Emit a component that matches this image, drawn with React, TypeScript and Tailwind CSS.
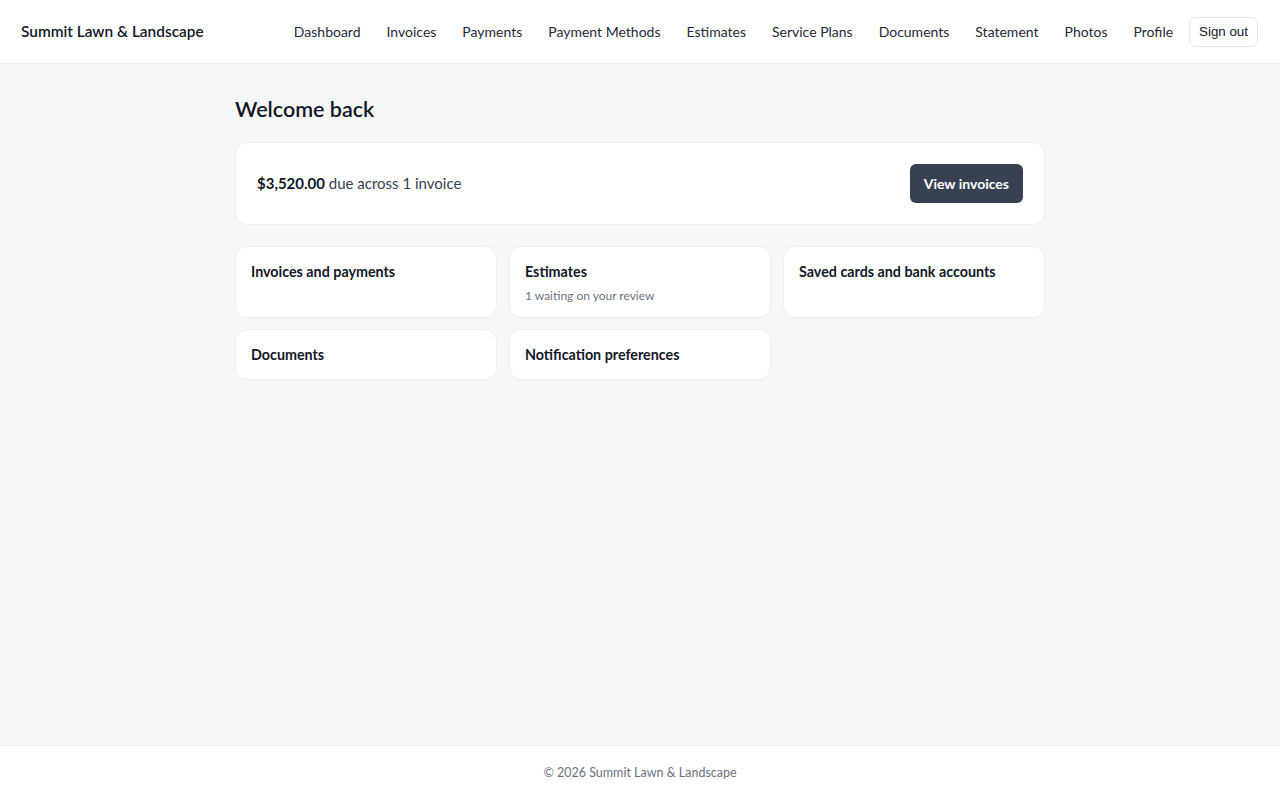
import React from "react";

const navItems = [
  "Dashboard",
  "Invoices",
  "Payments",
  "Payment Methods",
  "Estimates",
  "Service Plans",
  "Documents",
  "Statement",
  "Photos",
  "Profile",
];

const cards: { title: string; sub?: string }[] = [
  { title: "Invoices and payments" },
  { title: "Estimates", sub: "1 waiting on your review" },
  { title: "Saved cards and bank accounts" },
  { title: "Documents" },
  { title: "Notification preferences" },
];

export default function App() {
  return (
    <div
      className="flex min-h-screen flex-col bg-[#f6f7f9] text-[#1f2937]"
      style={{ fontFamily: "Lato, sans-serif" }}
    >
      <header className="flex h-[64px] items-center justify-between border-b border-[#eceef1] bg-white pl-[21px] pr-[22px]">
        <span className="text-[15.4px] font-semibold text-[#111827]">
          Summit Lawn &amp; Landscape
        </span>
        <nav className="flex items-center gap-[26px] text-[14px] text-[#1f2937]">
          {navItems.map((item) => (
            <a key={item} href="#" className="whitespace-nowrap">
              {item}
            </a>
          ))}
          <button
            className="-ml-[10px] h-[30px] rounded-md border border-[#e5e7eb] bg-white px-[9px] text-[13.33px] text-[#111827]"
            style={{ fontFamily: '"Liberation Sans", Arial, sans-serif' }}
          >
            Sign out
          </button>
        </nav>
      </header>

      <main className="mx-auto w-[810px] flex-1 pt-[30px]">
        <h1 className="mb-[18px] text-[21.5px] leading-[30px] font-semibold text-[#111827]">
          Welcome back
        </h1>
        <div className="flex h-[83px] items-center justify-between rounded-xl border border-[#eceef1] bg-white pl-[21px] pr-[21px]">
          <p className="text-[15px] text-[#374151]">
            <span className="font-bold text-[#111827]">$3,520.00</span> due
            across 1 invoice
          </p>
          <button className="h-[39px] rounded-md bg-[#374151] px-[14px] text-[14px] font-bold text-white">
            View invoices
          </button>
        </div>

        <div className="mt-[21px] grid grid-cols-3 gap-x-3 gap-y-[11px]">
          {cards.map((c, i) => (
            <div
              key={c.title}
              className={
                "rounded-xl border border-[#eceef1] bg-white px-[15px] " +
                (i < 3 ? "h-[72px] pt-[15px]" : "h-[51px] pt-[15px]")
              }
            >
              <div className="text-[14.3px] leading-[20px] font-bold text-[#111827]">
                {c.title}
              </div>
              {c.sub && (
                <div className="mt-[6px] text-[12px] leading-[16px] text-[#6b7280]">
                  {c.sub}
                </div>
              )}
            </div>
          ))}
        </div>
      </main>

      <footer className="flex h-[55px] items-center justify-center border-t border-[#eceef1] bg-white text-[12.5px] text-[#6b7280]">
        © 2026 Summit Lawn &amp; Landscape
      </footer>
    </div>
  );
}
